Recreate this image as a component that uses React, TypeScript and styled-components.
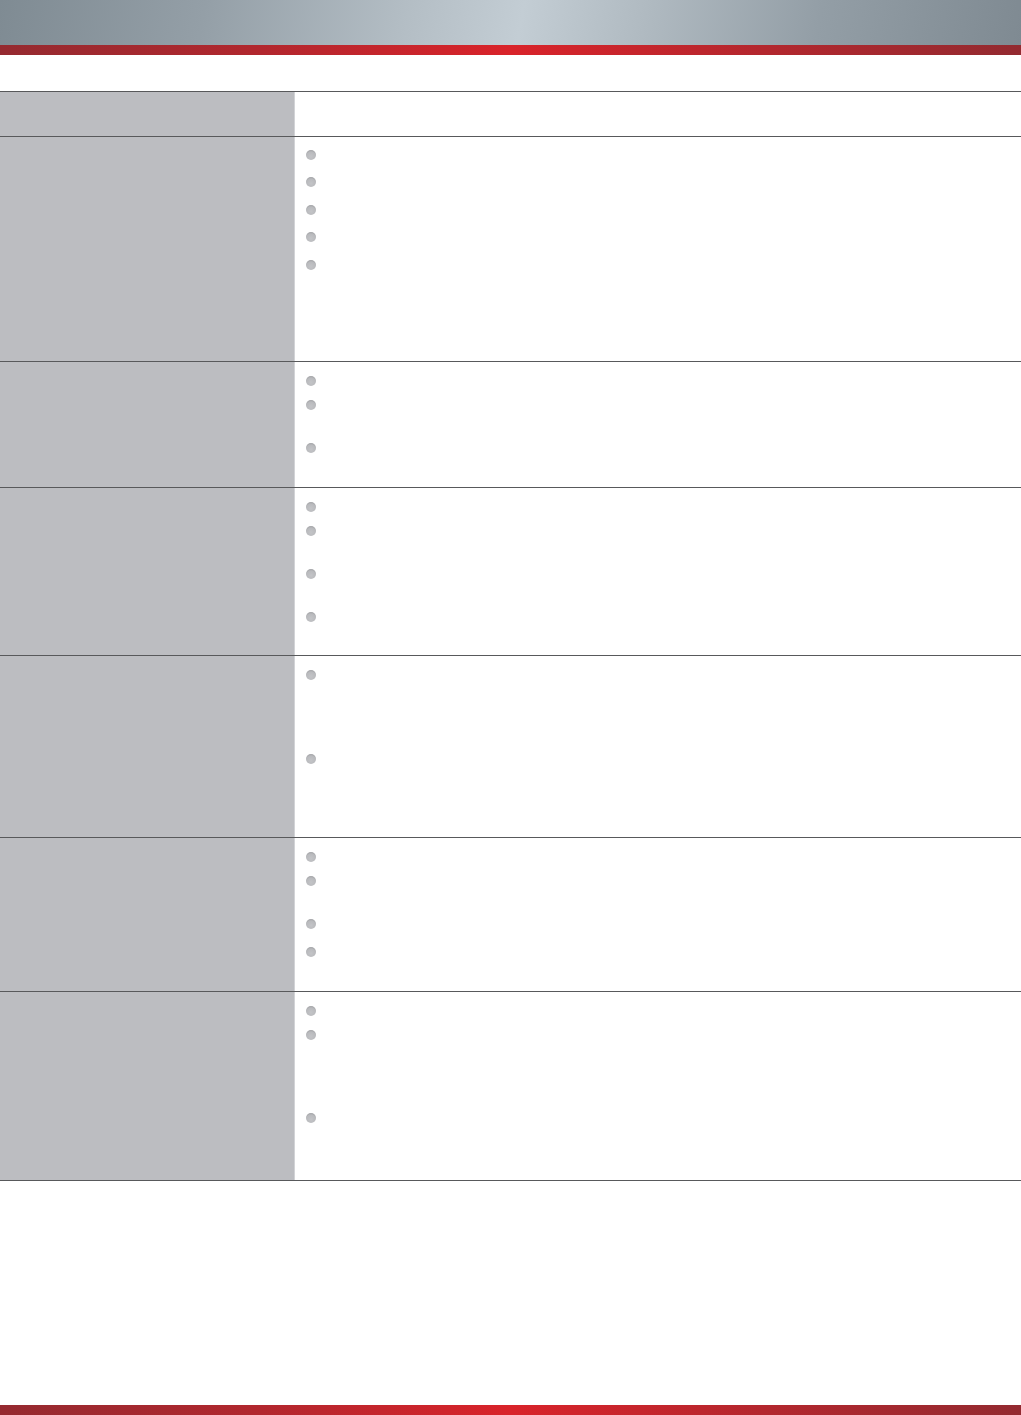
import React from "react";
import styled, { createGlobalStyle } from "styled-components";

const Global = createGlobalStyle`
  html, body { margin: 0; padding: 0; background: #ffffff; }
  body { font-family: "Liberation Sans", Arial, sans-serif; }
`;

const Page = styled.div`
  display: flex;
  flex-direction: column;
  min-height: 1415px;
  width: 1021px;
  background: #fff;
`;

const Header = styled.header`
  display: flex;
  flex-direction: column;
`;

const SteelBar = styled.div`
  height: 45px;
  background: linear-gradient(
    100deg,
    #7f8b93 0%,
    #949fa7 20%,
    #b4bec5 40%,
    #c3cdd4 51%,
    #b0bac1 63%,
    #939ea6 80%,
    #7f8a92 100%
  );
`;

const RedBand = styled.div`
  height: 10px;
  background: linear-gradient(
    90deg,
    #952a30 0%,
    #b1272e 25%,
    #d9232a 50%,
    #b3272e 75%,
    #932a30 100%
  );
`;

const Table = styled.div`
  display: flex;
  flex-direction: column;
  margin-top: 36px;
  border-bottom: 1px solid #58595b;
`;

const Row = styled.div<{ $h: number }>`
  display: grid;
  grid-template-columns: 295px 1fr;
  height: ${(p) => p.$h}px;
  border-top: 1px solid #58595b;
  box-sizing: border-box;
`;

const LabelCell = styled.div`
  background: #bcbdc1;
  border-right: 1px solid #d2d3d6;
`;

const ContentCell = styled.ul<{ $top: number }>`
  list-style: none;
  margin: 0;
  padding: ${(p) => p.$top}px 0 0 11px;
  display: flex;
  flex-direction: column;
`;

const Item = styled.li<{ $h: number }>`
  height: ${(p) => p.$h}px;
  display: flex;
  align-items: flex-start;
`;

const Bullet = styled.span`
  width: 10px;
  height: 10px;
  border-radius: 50%;
  background: radial-gradient(
    circle at 50% 65%,
    #c3c4c7 0%,
    #b9babd 55%,
    #8c8d90 100%
  );
`;

type RowSpec = { h: number; top: number; gaps: number[] };

const rows: RowSpec[] = [
  { h: 45, top: 0, gaps: [] },
  { h: 225, top: 13, gaps: [27, 28, 27, 28, 20] },
  { h: 126, top: 14, gaps: [24, 43, 20] },
  { h: 168, top: 14, gaps: [24, 43, 43, 20] },
  { h: 182, top: 14, gaps: [84, 20] },
  { h: 154, top: 14, gaps: [24, 43, 28, 20] },
  { h: 189, top: 14, gaps: [24, 83, 20] },
];

const Footer = styled.footer`
  margin-top: auto;
  height: 10px;
  background: linear-gradient(
    90deg,
    #952a30 0%,
    #b1272e 25%,
    #d9232a 50%,
    #b3272e 75%,
    #932a30 100%
  );
`;

export default function App() {
  return (
    <>
      <Global />
      <Page>
        <Header>
          <SteelBar />
          <RedBand />
        </Header>
        <Table>
          {rows.map((r, i) => (
            <Row key={i} $h={r.h}>
              <LabelCell />
              <ContentCell $top={r.top}>
                {r.gaps.map((g, j) => (
                  <Item key={j} $h={g}>
                    <Bullet />
                  </Item>
                ))}
              </ContentCell>
            </Row>
          ))}
        </Table>
        <Footer />
      </Page>
    </>
  );
}
